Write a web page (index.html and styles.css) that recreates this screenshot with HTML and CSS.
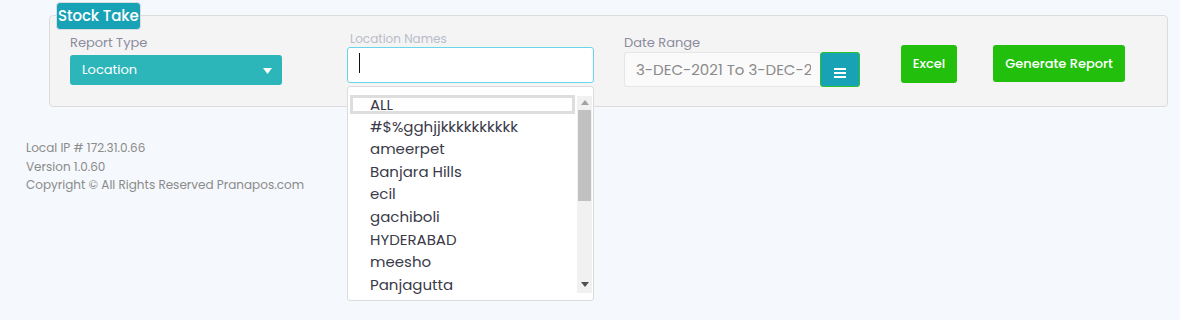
FILE: index.html
```html
<!DOCTYPE html>
<html>
<head>
<meta charset="utf-8">
<title>Stock Take</title>
<link rel="stylesheet" href="styles.css">
</head>
<body>
<div class="page">
  <div class="panel">
    <div class="badge">Stock Take</div>
    <div class="row">
      <div class="col col-type">
        <div class="label">Report Type</div>
        <div class="select">
          <span>Location</span>
          <svg class="caret" width="9" height="6" viewBox="0 0 9 6"><path d="M0 0H9L4.5 6Z" fill="#fff"/></svg>
        </div>
      </div>
      <div class="col col-loc">
        <div class="label label-light">Location Names</div>
        <div class="loc-wrap">
          <div class="input-focus"><span class="cursor"></span></div>
          <div class="dropdown">
            <div class="listbox">
              <div class="options">
                <div class="opt sel">ALL</div>
                <div class="opt">#$%gghjjkkkkkkkkkk</div>
                <div class="opt">ameerpet</div>
                <div class="opt">Banjara Hills</div>
                <div class="opt">ecil</div>
                <div class="opt">gachiboli</div>
                <div class="opt">HYDERABAD</div>
                <div class="opt">meesho</div>
                <div class="opt">Panjagutta</div>
              </div>
              <div class="scrollbar">
                <svg class="arrow" width="8" height="5" viewBox="0 0 8 5"><path d="M0 5H8L4 0Z" fill="#a3a3a3"/></svg>
                <div class="thumb"></div>
                <div class="track-fill"></div>
                <svg class="arrow" width="8" height="5" viewBox="0 0 8 5"><path d="M0 0H8L4 5Z" fill="#505050"/></svg>
              </div>
            </div>
          </div>
        </div>
      </div>
      <div class="col col-date">
        <div class="label">Date Range</div>
        <div class="date-group">
          <div class="date-input"><div class="date-text">3-DEC-2021 To 3-DEC-2021</div></div>
          <div class="menu-btn">
            <svg width="12" height="10" viewBox="0 0 12 10"><rect x="0" y="0" width="12" height="2" fill="#fff"/><rect x="0" y="4" width="12" height="2" fill="#fff"/><rect x="0" y="8" width="12" height="2" fill="#fff"/></svg>
          </div>
        </div>
      </div>
      <div class="btn btn-excel">Excel</div>
      <div class="btn btn-gen">Generate Report</div>
    </div>
  </div>
  <div class="footer">
    <div>Local IP # 172.31.0.66</div>
    <div>Version 1.0.60</div>
    <div>Copyright © All Rights Reserved Pranapos.com</div>
  </div>
</div>
</body>
</html>
```

FILE: styles.css
```css
* { box-sizing: border-box; }
html, body { margin: 0; padding: 0; }
body {
  background: #f5f8fc;
  font-family: "Poppins", "Inter", "Open Sans", sans-serif;
  width: 1180px;
  height: 320px;
  overflow: hidden;
}
.page { padding: 15px 12px 0 49px; }
.panel {
  position: relative;
  width: 1119px;
  height: 92px;
  background: #f4f4f4;
  border: 1px solid #dcdcdc;
  border-radius: 4px;
}
.badge {
  position: absolute;
  left: 6px;
  top: -14px;
  height: 28px;
  padding: 0 1px;
  background: #18a2b6;
  border: 1px solid #d8dde2;
  border-radius: 4px;
  color: #fff;
  font-size: 15px;
  font-weight: 500;
  line-height: 26px;
  letter-spacing: -0.1px;
}
.row {
  display: flex;
  align-items: flex-start;
  padding-left: 20px;
}
.label {
  font-size: 13px;
  color: #8c8c9e;
  line-height: 18px;
}
.label-light { font-size: 12px; color: #b9bcc9; line-height: 16px; padding-left: 3px; margin-top: 1px; margin-bottom: -1px; }
.col-type { width: 212px; padding-top: 18px; }
.select {
  margin-top: 3px;
  height: 30px;
  background: #2cb6b9;
  border-radius: 3px;
  color: #fff;
  font-size: 13px;
  display: flex;
  align-items: center;
  justify-content: space-between;
  padding: 0 10px 0 12px;
}
.caret { margin-top: 1px; }
.col-loc { width: 247px; margin-left: 65px; padding-top: 14px; }
.loc-wrap { position: relative; margin-top: 1px; }
.input-focus {
  height: 36px;
  background: #fff;
  border: 1px solid #69d6e8;
  border-radius: 3px;
  padding: 5px 11px;
}
.cursor { display: block; width: 1px; height: 20px; background: #111; }
.dropdown {
  position: absolute;
  left: 0;
  top: 39px;
  width: 247px;
  height: 215px;
  background: #fff;
  border: 1px solid #dcdcdc;
  border-radius: 3px;
  z-index: 5;
}
.listbox { display: flex; padding: 6px 1px 0 2px; }
.options { flex: 1; }
.opt {
  height: 22.6px;
  line-height: 22.6px;
  padding-left: 20px;
  font-size: 15px;
  color: #3a3a48;
  white-space: nowrap;
}
.opt.sel {
  height: 19px;
  line-height: 19px;
  margin: 2px 2px 1.6px 0;
  box-shadow: inset 0 0 0 3px #dddddd;
}
.scrollbar {
  width: 15px;
  margin-top: 3px;
  height: 197px;
  background: #f1f1f1;
  display: flex;
  flex-direction: column;
  align-items: center;
}
.arrow { margin: 4px 0 5px; flex: none; }
.scrollbar .arrow:last-child { margin: 5px 0 6px; }
.thumb { width: 13px; height: 91px; background: #c1c1c1; flex: none; }
.track-fill { flex: 1; }
.col-date { margin-left: 30px; padding-top: 18px; }
.date-group { display: flex; margin-top: 0; }
.date-input {
  width: 196px;
  height: 35px;
  background: #fafafa;
  border: 1px solid #e6e6e6;
  border-right: none;
  border-radius: 3px 0 0 3px;
  padding: 0 9px 0 11px;
}
.date-text {
  color: #8a8a8a;
  font-size: 15px;
  line-height: 33px;
  white-space: nowrap;
  overflow: hidden;
}
.menu-btn {
  width: 40px;
  height: 35px;
  background: #18a2b6;
  border: 1px solid #2fc12a;
  border-radius: 3px;
  display: flex;
  align-items: center;
  justify-content: center;
  padding-top: 6px;
}
.btn {
  background: #22bf0c;
  color: #fff;
  font-size: 13px;
  font-weight: 500;
  border-radius: 3px;
  display: flex;
  align-items: center;
  justify-content: center;
  margin-top: 29px;
}
.btn-excel { width: 56px; height: 38px; margin-left: 41px; }
.btn-gen { width: 132px; height: 37px; margin-left: 36px; }
.footer {
  margin-top: 32px;
  margin-left: -23px;
  font-size: 12px;
  color: #8b8b8b;
  line-height: 18.5px;
}
```
